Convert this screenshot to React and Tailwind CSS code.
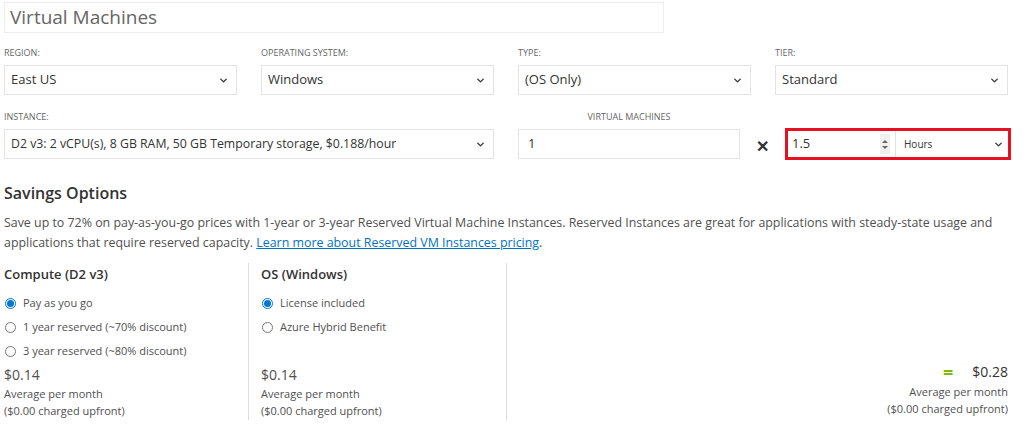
import { ChevronDown } from "lucide-react";

function App() {
  return (
    <div
      className="h-[428px] w-[1024px] overflow-hidden bg-white px-[4px] text-[#505050]"
      style={{ fontFamily: "'Open Sans', 'Noto Sans', sans-serif" }}
    >
      <div className="mt-[2px] flex h-[31px] w-[660px] items-center border border-[#eeeeee] pl-[5px] text-[19px] text-[#666666]">
        Virtual Machines
      </div>

      <div className="mt-[15px] grid w-[1004px] grid-cols-4 gap-x-[24px]">
        <Field label="Region:" value="East US" />
        <Field label="Operating system:" value="Windows" />
        <Field label="Type:" value="(OS Only)" />
        <Field label="Tier:" value="Standard" />
      </div>

      <div className="mt-[17px] flex w-[1010px] items-end">
        <div className="w-[490px]">
          <FieldLabel>Instance:</FieldLabel>
          <SelectBox value="D2 v3: 2 vCPU(s), 8 GB RAM, 50 GB Temporary storage, $0.188/hour" small />
        </div>
        <div className="ml-[24px] w-[222px]">
          <p className="h-[17px] text-center text-[9px] uppercase leading-[10px] text-[#666666]">
            Virtual Machines
          </p>
          <div className="flex h-[30px] items-center border border-[#e3e3e3] pl-[9px] text-[13px] text-[#333333]">
            1
          </div>
        </div>
        <div className="flex h-[30px] w-[45px] items-center justify-center pt-[4px] text-[16px] font-bold text-[#333333]">
          ✕
        </div>
        <div className="-mb-[1px] flex h-[32px] w-[226px] border-[3px] border-[#e81123]">
          <div className="flex w-[108px] items-center justify-between border-r border-[#e3e3e3] pl-[4px] pr-[5px] text-[13px] text-[#333333]">
            1.5
            <div className="flex h-[20px] w-[10px] flex-col items-center justify-center gap-[3px] bg-[#f0f0f0]">
              <span className="h-0 w-0 border-x-[3px] border-b-[3px] border-x-transparent border-b-[#666666]" />
              <span className="h-0 w-0 border-x-[3px] border-t-[3px] border-x-transparent border-t-[#666666]" />
            </div>
          </div>
          <div className="flex flex-1 items-center justify-between pl-[8px] pr-[4px] text-[10px] text-[#333333]">
            Hours
            <ChevronDown size={11} strokeWidth={3} className="text-[#333333]" />
          </div>
        </div>
      </div>

      <h2 className="mt-[23px] text-[16px] font-semibold leading-[22px] text-[#333333]">
        Savings Options
      </h2>
      <p className="mt-[9px] w-[1012px] text-[12.4px] leading-[20px] text-[#505050]">
        Save up to 72% on pay-as-you-go prices with 1-year or 3-year Reserved Virtual Machine Instances. Reserved
        Instances are great for applications with steady-state usage and applications that require reserved capacity.{" "}
        <a className="text-[#0072c6] underline">Learn more about Reserved VM Instances pricing</a>.
      </p>

      <div className="mt-[10px] flex h-[157px] w-[1004px]">
        <OptionColumn
          className="w-[245px] border-r border-[#dcdcdc]"
          title="Compute (D2 v3)"
          options={[
            { label: "Pay as you go", checked: true },
            { label: "1 year reserved (~70% discount)" },
            { label: "3 year reserved (~80% discount)" },
          ]}
        />
        <OptionColumn
          className="w-[258px] border-r border-[#dcdcdc] pl-[12px]"
          title="OS (Windows)"
          options={[
            { label: "License included", checked: true },
            { label: "Azure Hybrid Benefit" },
          ]}
        />
        <div className="flex flex-1 flex-col items-end justify-end pb-[3px] text-[11px] leading-[17px]">
          <div className="flex items-center text-[14px] leading-[20px] text-[#333333]">
            <span className="mr-[19px] text-[18px] font-bold leading-[18px] text-[#7fba00]">=</span>
            $0.28
          </div>
          <p className="mt-[1px]">Average per month</p>
          <p>($0.00 charged upfront)</p>
        </div>
      </div>
    </div>
  );
}

function FieldLabel({ children }) {
  return <p className="h-[17px] text-[9px] uppercase leading-[10px] text-[#666666]">{children}</p>;
}

function SelectBox({ value, small }) {
  return (
    <div
      className={`flex h-[30px] items-center justify-between border border-[#e3e3e3] pl-[6px] pr-[7px] text-[#333333] ${
        small ? "text-[12.3px]" : "text-[13px]"
      }`}
    >
      <span className="truncate">{value}</span>
      <ChevronDown size={11} strokeWidth={3} className="shrink-0 text-[#333333]" />
    </div>
  );
}

function Field({ label, value }) {
  return (
    <div>
      <FieldLabel>{label}</FieldLabel>
      <SelectBox value={value} />
    </div>
  );
}

function Radio({ checked }) {
  if (checked) {
    return (
      <span className="flex h-[11px] w-[11px] items-center justify-center rounded-full border border-[#0078d4]">
        <span className="h-[7px] w-[7px] rounded-full bg-[#0078d4]" />
      </span>
    );
  }
  return <span className="h-[11px] w-[11px] rounded-full border border-[#777777]" />;
}

function OptionColumn({ className, title, options }) {
  return (
    <div className={`flex flex-col pt-[2px] ${className}`}>
      <h3 className="text-[13px] font-semibold leading-[18px] text-[#333333]">{title}</h3>
      <div className="mt-[12px] flex flex-col gap-[7px]">
        {options.map((option) => (
          <label className="flex h-[17px] items-center gap-[7px] pl-[1px] text-[11px]" key={option.label}>
            <Radio checked={option.checked} />
            {option.label}
          </label>
        ))}
      </div>
      <div className="mt-auto pb-[1px] text-[11px] leading-[17px]">
        <p className="text-[14px] leading-[20px]">$0.14</p>
        <p>Average per month</p>
        <p>($0.00 charged upfront)</p>
      </div>
    </div>
  );
}

export default App;
